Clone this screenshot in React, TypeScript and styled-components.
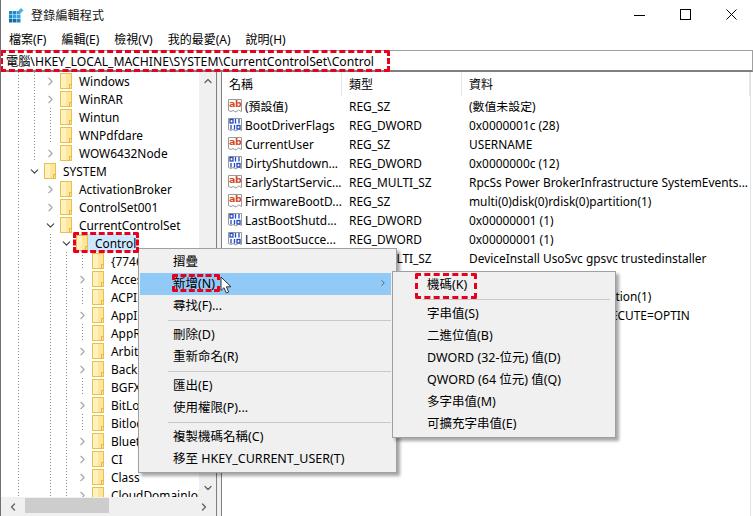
import React from "react";
import styled, { createGlobalStyle } from "styled-components";
import { ChevronDown, ChevronLeft, ChevronRight, ChevronUp } from "lucide-react";

const GlobalStyle = createGlobalStyle`
  html, body {
    margin: 0;
    padding: 0;
    background: #fff;
  }
  * {
    box-sizing: border-box;
  }
`;

const FONT = `"Noto Sans", "Noto Sans CJK TC", sans-serif`;

const Window = styled.div`
  position: relative;
  width: 753px;
  height: 516px;
  overflow: hidden;
  display: flex;
  flex-direction: column;
  background: #fff;
  border-left: 1px solid #707070;
  font-family: ${FONT};
  font-size: 12px;
  color: #000;
`;

const TitleBar = styled.div`
  height: 30px;
  display: flex;
  align-items: center;
  padding-left: 8px;
  margin-right: -1px;
  flex-shrink: 0;
`;

const TitleText = styled.span`
  margin-left: 7px;
  font-size: 12px;
  letter-spacing: 0.2px;
  color: #111;
  flex: 1;
`;

const WindowButton = styled.div`
  width: 46px;
  height: 30px;
  padding-bottom: 2px;
  display: flex;
  align-items: center;
  justify-content: center;
`;

const MenuBar = styled.div`
  height: 20px;
  display: flex;
  align-items: center;
  padding-left: 8px;
  gap: 15px;
  flex-shrink: 0;
`;

const MenuBarItem = styled.span`
  font-size: 12px;
  line-height: 20px;
  white-space: nowrap;
`;

const AddressBar = styled.div`
  position: relative;
  height: 22px;
  flex-shrink: 0;
  display: flex;
  align-items: center;
  padding-left: 5px;
  border: 1px solid #a0a0a0;
  border-bottom: 2px solid #808080;
  border-left: none;
  font-size: 12.2px;
  white-space: nowrap;
`;

const Mark = styled.span<{ $inset: string }>`
  position: absolute;
  inset: ${(p) => p.$inset};
  border: 3px dashed #e8001c;
  border-radius: 2px;
  pointer-events: none;
  z-index: 5;
`;

const Body = styled.div`
  flex: 1;
  display: flex;
  min-height: 0;
`;

const TreePane = styled.div`
  width: 216px;
  flex-shrink: 0;
  display: flex;
  flex-direction: column;
  background: #fff;
  border-right: 1px solid #808080;
`;

const TreeMain = styled.div`
  flex: 1;
  min-height: 0;
  display: flex;
`;

const TreeRows = styled.div`
  flex: 1;
  min-width: 0;
  overflow: hidden;
`;

const dots = (x: number) =>
  `repeating-linear-gradient(to bottom, #8a8a8a 0 1px, transparent 1px 3px) ${x}px 0 / 1px 100% no-repeat`;

const TreeRow = styled.div<{ $level: number; $guides: number[] }>`
  height: 18px;
  display: flex;
  align-items: center;
  padding-left: ${(p) => 25 + 16 * (p.$level - 1)}px;
  white-space: nowrap;
  background: ${(p) => (p.$guides.length ? p.$guides.map(dots).join(", ") : "none")};
`;

const Twisty = styled.span<{ $open?: boolean }>`
  width: 16px;
  height: 18px;
  margin-right: 2px;
  flex-shrink: 0;
  display: flex;
  align-items: center;
  justify-content: center;
  color: ${(p) => (p.$open ? "#404040" : "#a6a6a6")};
`;

const Hook = styled.span`
  width: 16px;
  height: 1px;
  margin-right: 2px;
  flex-shrink: 0;
  background: repeating-linear-gradient(to right, transparent 0 8px, #8a8a8a 8px 9px, transparent 9px 10px) 0 0 / 100% 1px no-repeat;
`;

const TreeItem = styled.span<{ $selected?: boolean }>`
  position: relative;
  display: flex;
  align-items: center;
  height: 18px;
  padding-right: 2px;
  background: ${(p) => (p.$selected ? "#cce8ff" : "transparent")};
`;

const TreeLabel = styled.span`
  margin-left: 7px;
  font-size: 11.9px;
`;

const VScroll = styled.div`
  width: 17px;
  flex-shrink: 0;
  background: #f0f0f0;
  display: flex;
  flex-direction: column;
  justify-content: space-between;
  align-items: center;
  color: #606060;
  padding: 3px 0;
`;

const HScroll = styled.div`
  height: 19px;
  flex-shrink: 0;
  display: flex;
  align-items: center;
  background: #f0f0f0;
  color: #606060;
`;

const ScrollEnd = styled.span`
  width: 24px;
  height: 19px;
  flex-shrink: 0;
  display: flex;
  align-items: center;
  justify-content: center;
`;

const HThumb = styled.span`
  width: 84px;
  height: 15px;
  margin-bottom: 2px;
  background: #cdcdcd;
`;

const HTrack = styled.span`
  flex: 1;
`;

const Splitter = styled.div`
  width: 5px;
  flex-shrink: 0;
  background: #f0f0f0;
  border-right: 1px solid #808080;
`;

const ListPane = styled.div`
  flex: 1;
  min-width: 0;
  overflow: hidden;
  margin-right: 2px;
  border-right: 1px solid #e3e3e3;
`;

const ListHeader = styled.div`
  height: 24px;
  display: flex;
  align-items: center;
`;

const HeaderCell = styled.span<{ $width: number }>`
  width: ${(p) => p.$width}px;
  height: 24px;
  flex-shrink: 0;
  padding-left: 7px;
  line-height: 26px;
  border-right: 1px solid #e5e5e5;
`;

const ListRow = styled.div`
  height: 19px;
  display: flex;
  align-items: center;
  white-space: nowrap;
  font-size: 11.9px;
`;

const NameCell = styled.span`
  width: 120px;
  flex-shrink: 0;
  display: flex;
  align-items: center;
  gap: 2px;
  padding-left: 5px;
  overflow: hidden;
`;

const TypeCell = styled.span`
  width: 120px;
  flex-shrink: 0;
  padding-left: 7px;
`;

const DataCell = styled.span`
  padding-left: 7px;
`;

const Menu = styled.div<{ $top: number; $left: number; $width: number }>`
  position: absolute;
  top: ${(p) => p.$top}px;
  left: ${(p) => p.$left}px;
  width: ${(p) => p.$width}px;
  padding: 2px 5px 2px 1px;
  background: #f0f0f0;
  border: 1px solid #a0a0a0;
  box-shadow: 3px 3px 3px rgba(0, 0, 0, 0.35);
  z-index: 3;
`;

const MenuItem = styled.div<{ $active?: boolean }>`
  position: relative;
  height: 22px;
  display: flex;
  align-items: center;
  justify-content: space-between;
  padding: 0 3px 3px 33px;
  background: ${(p) => (p.$active ? "#91c9f7" : "transparent")};
  font-size: 12.5px;
  white-space: nowrap;
`;

const MenuLabel = styled.span`
  position: relative;
`;

const MenuSeparator = styled.div`
  height: 1px;
  margin: 3px 0 3px 28px;
  background: #c8c8c8;
`;

const Cursor = styled.svg`
  position: absolute;
  top: 3px;
  left: 80px;
  z-index: 6;
`;

const IconStack = styled.span`
  position: relative;
  width: 16px;
  height: 16px;
  flex-shrink: 0;
  display: block;
`;

const AbText = styled.span`
  position: absolute;
  top: -1px;
  left: 2px;
  font-family: "DejaVu Sans", sans-serif;
  font-size: 9.5px;
  font-weight: 700;
  letter-spacing: -0.3px;
  line-height: 14px;
  color: #d8492a;
`;

function RegIcon() {
  return (
    <svg width="16" height="16" viewBox="0 0 16 16">
      <path d="M1.5 1.5h13v12l-3-1.5-2.5 2-3-1.5-2 1-2.5-1z" fill="#fff" stroke="#9a9a9a" />
    </svg>
  );
}

function StringIcon() {
  return (
    <IconStack>
      <RegIcon />
      <AbText>ab</AbText>
    </IconStack>
  );
}

function BinaryIcon() {
  return (
    <svg width="16" height="16" viewBox="0 0 16 16" style={{ flexShrink: 0 }}>
      <path d="M1.5 1.5h13v12l-3-1.5-2.5 2-3-1.5-2 1-2.5-1z" fill="#fff" stroke="#9a9a9a" />
      <g fill="none" stroke="#2348c4" strokeWidth="1.3">
        <rect x="3" y="2.5" width="3" height="3.5" />
        <path d="M8.5 2v4.5M12 2v4.5" />
        <path d="M4 8v4.5M7.5 8v4.5" />
        <rect x="10" y="8.5" width="3" height="3.5" />
      </g>
    </svg>
  );
}

function FolderIcon() {
  return (
    <svg width="12" height="16" viewBox="0 0 12 16" style={{ flexShrink: 0 }}>
      <rect x="0.5" y="0.5" width="11" height="15" fill="#ffe79a" stroke="#e8c050" />
      <rect x="1" y="1" width="5" height="14" fill="#fff0bf" />
      <path d="M9.5 15.5v-4h2" fill="none" stroke="#e2b440" />
    </svg>
  );
}

function AppIcon() {
  return (
    <svg width="15" height="15" viewBox="0 0 15 15" style={{ flexShrink: 0 }}>
      <g fill="#1e88c8">
        <rect x="0" y="3" width="3.5" height="3.5" />
        <rect x="4" y="3" width="3.5" height="3.5" />
        <rect x="8" y="3" width="3.5" height="3.5" fill="#35a4dc" />
        <rect x="0" y="7" width="3.5" height="3.5" />
        <rect x="4" y="7" width="3.5" height="3.5" fill="#35a4dc" />
        <rect x="8" y="7" width="3.5" height="3.5" fill="#35a4dc" />
        <rect x="0" y="11" width="3.5" height="3.5" fill="#0f6ea8" />
        <rect x="4" y="11" width="3.5" height="3.5" fill="#0f6ea8" />
        <rect x="8" y="11" width="3.5" height="3.5" />
      </g>
      <path d="M12 0l2.5 2.5L12 5 9.5 2.5z" fill="#4db4e6" />
    </svg>
  );
}

type TreeEntry = {
  label: string;
  level: number;
  twisty: "closed" | "open" | "none";
  guides: number[];
  selected?: boolean;
};

const upper = [17, 33];
const lower = [17, 49, 65];
const kids = [17, 49, 65, 81];

const treeEntries: TreeEntry[] = [
  { label: "Windows", level: 2, twisty: "closed", guides: upper },
  { label: "WinRAR", level: 2, twisty: "closed", guides: upper },
  { label: "Wintun", level: 2, twisty: "none", guides: [17, 33, 49] },
  { label: "WNPdfdare", level: 2, twisty: "none", guides: [17, 33, 49] },
  { label: "WOW6432Node", level: 2, twisty: "closed", guides: upper },
  { label: "SYSTEM", level: 1, twisty: "open", guides: [17] },
  { label: "ActivationBroker", level: 2, twisty: "closed", guides: [17] },
  { label: "ControlSet001", level: 2, twisty: "closed", guides: [17] },
  { label: "CurrentControlSet", level: 2, twisty: "open", guides: [17] },
  { label: "Control", level: 3, twisty: "open", guides: [17, 49], selected: true },
  { label: "{7746D80F-97E0-4E26-9543-26B41FC22F79}", level: 4, twisty: "none", guides: kids },
  { label: "AccessibilitySettings", level: 4, twisty: "closed", guides: lower },
  { label: "ACPI", level: 4, twisty: "none", guides: kids },
  { label: "AppID", level: 4, twisty: "closed", guides: lower },
  { label: "AppReadiness", level: 4, twisty: "none", guides: kids },
  { label: "Arbiters", level: 4, twisty: "closed", guides: lower },
  { label: "BackupRestore", level: 4, twisty: "closed", guides: lower },
  { label: "BGFX", level: 4, twisty: "none", guides: kids },
  { label: "BitLocker", level: 4, twisty: "closed", guides: lower },
  { label: "Bitlocker", level: 4, twisty: "none", guides: kids },
  { label: "Bluetooth", level: 4, twisty: "closed", guides: lower },
  { label: "CI", level: 4, twisty: "closed", guides: lower },
  { label: "Class", level: 4, twisty: "closed", guides: lower },
  { label: "CloudDomainJoin", level: 4, twisty: "closed", guides: lower },
];

const listEntries = [
  { name: "(預設值)", type: "REG_SZ", data: "(數值未設定)", kind: "text" },
  { name: "BootDriverFlags", type: "REG_DWORD", data: "0x0000001c (28)", kind: "bin" },
  { name: "CurrentUser", type: "REG_SZ", data: "USERNAME", kind: "text" },
  { name: "DirtyShutdown...", type: "REG_DWORD", data: "0x0000000c (12)", kind: "bin" },
  { name: "EarlyStartServic...", type: "REG_MULTI_SZ", data: "RpcSs Power BrokerInfrastructure SystemEvents...", kind: "text" },
  { name: "FirmwareBootD...", type: "REG_SZ", data: "multi(0)disk(0)rdisk(0)partition(1)", kind: "text" },
  { name: "LastBootShutd...", type: "REG_DWORD", data: "0x00000001 (1)", kind: "bin" },
  { name: "LastBootSucce...", type: "REG_DWORD", data: "0x00000001 (1)", kind: "bin" },
  { name: "PreshutdownO...", type: "REG_MULTI_SZ", data: "DeviceInstall UsoSvc gpsvc trustedinstaller", kind: "text" },
  { name: "", type: "", data: "", kind: "none" },
  { name: "SystemBootDe...", type: "REG_SZ", data: "multi(0)disk(0)rdisk(0)partition(1)", kind: "text" },
  { name: "SystemStartOp...", type: "REG_SZ", data: "FVEBOOT=2539520  NOEXECUTE=OPTIN", kind: "text" },
];

function App() {
  return (
    <>
      <GlobalStyle />
      <Window>
        <TitleBar>
          <AppIcon />
          <TitleText>登錄編輯程式</TitleText>
          <WindowButton>
            <svg width="11" height="11" viewBox="0 0 11 11">
              <path d="M0 6.5h11" stroke="#000" />
            </svg>
          </WindowButton>
          <WindowButton>
            <svg width="11" height="11" viewBox="0 0 11 11">
              <rect x="0.5" y="0.5" width="10" height="10" fill="none" stroke="#000" />
            </svg>
          </WindowButton>
          <WindowButton>
            <svg width="11" height="11" viewBox="0 0 11 11">
              <path d="M0.5 0.5l10 10M10.5 0.5l-10 10" stroke="#000" />
            </svg>
          </WindowButton>
        </TitleBar>
        <MenuBar>
          <MenuBarItem>檔案(F)</MenuBarItem>
          <MenuBarItem>編輯(E)</MenuBarItem>
          <MenuBarItem>檢視(V)</MenuBarItem>
          <MenuBarItem>我的最愛(A)</MenuBarItem>
          <MenuBarItem>說明(H)</MenuBarItem>
        </MenuBar>
        <AddressBar>
          電腦\HKEY_LOCAL_MACHINE\SYSTEM\CurrentControlSet\Control
          <Mark $inset="-1px 362px -2px -1px" />
        </AddressBar>
        <Body>
          <TreePane>
            <TreeMain>
              <TreeRows>
                {treeEntries.map((entry) => (
                  <TreeRow key={entry.label} $level={entry.level} $guides={entry.guides}>
                    {entry.twisty === "none" ? (
                      <Hook />
                    ) : (
                      <Twisty $open={entry.twisty === "open"}>
                        {entry.twisty === "open" ? (
                          <ChevronDown size={13} strokeWidth={2} />
                        ) : (
                          <ChevronRight size={13} strokeWidth={2} />
                        )}
                      </Twisty>
                    )}
                    <TreeItem $selected={entry.selected}>
                      <FolderIcon />
                      <TreeLabel>{entry.label}</TreeLabel>
                      {entry.selected && <Mark $inset="-2px -1px -1px -3px" />}
                    </TreeItem>
                  </TreeRow>
                ))}
              </TreeRows>
              <VScroll>
                <ChevronUp size={12} strokeWidth={2.5} />
                <ChevronDown size={12} strokeWidth={2.5} />
              </VScroll>
            </TreeMain>
            <HScroll>
              <ScrollEnd>
                <ChevronLeft size={12} strokeWidth={2.5} />
              </ScrollEnd>
              <HThumb />
              <HTrack />
              <ScrollEnd>
                <ChevronRight size={12} strokeWidth={2.5} />
              </ScrollEnd>
            </HScroll>
          </TreePane>
          <Splitter />
          <ListPane>
            <ListHeader>
              <HeaderCell $width={120}>名稱</HeaderCell>
              <HeaderCell $width={120}>類型</HeaderCell>
              <HeaderCell $width={288}>資料</HeaderCell>
            </ListHeader>
            {listEntries.map((row, index) => (
              <ListRow key={index}>
                <NameCell>
                  {row.kind === "text" && <StringIcon />}
                  {row.kind === "bin" && <BinaryIcon />}
                  {row.name}
                </NameCell>
                <TypeCell>{row.type}</TypeCell>
                <DataCell>{row.data}</DataCell>
              </ListRow>
            ))}
          </ListPane>
        </Body>

        <Menu $top={248} $left={137} $width={259}>
          <MenuItem>摺疊</MenuItem>
          <MenuItem $active>
            <MenuLabel>
              新增(N)
              <Mark $inset="1px -5px 0px -1px" />
            </MenuLabel>
            <ChevronRight size={10} strokeWidth={2} color="#505050" />
            <Cursor width="13" height="18" viewBox="0 0 13 18">
              <path d="M1 1v13.5l3-2.8 2.3 5.3 2.4-1-2.3-5.2H11z" fill="#fff" stroke="#333" />
            </Cursor>
          </MenuItem>
          <MenuItem>尋找(F)...</MenuItem>
          <MenuSeparator />
          <MenuItem>刪除(D)</MenuItem>
          <MenuItem>重新命名(R)</MenuItem>
          <MenuSeparator />
          <MenuItem>匯出(E)</MenuItem>
          <MenuItem>使用權限(P)...</MenuItem>
          <MenuSeparator />
          <MenuItem>複製機碼名稱(C)</MenuItem>
          <MenuItem>移至 HKEY_CURRENT_USER(T)</MenuItem>
        </Menu>

        <Menu $top={271} $left={391} $width={224}>
          <MenuItem>
            <MenuLabel>
              機碼(K)
              <Mark $inset="-1px -10px -6px -12px" />
            </MenuLabel>
          </MenuItem>
          <MenuSeparator />
          <MenuItem>字串值(S)</MenuItem>
          <MenuItem>二進位值(B)</MenuItem>
          <MenuItem>DWORD (32-位元) 值(D)</MenuItem>
          <MenuItem>QWORD (64 位元) 值(Q)</MenuItem>
          <MenuItem>多字串值(M)</MenuItem>
          <MenuItem>可擴充字串值(E)</MenuItem>
        </Menu>
      </Window>
    </>
  );
}

export default App;
